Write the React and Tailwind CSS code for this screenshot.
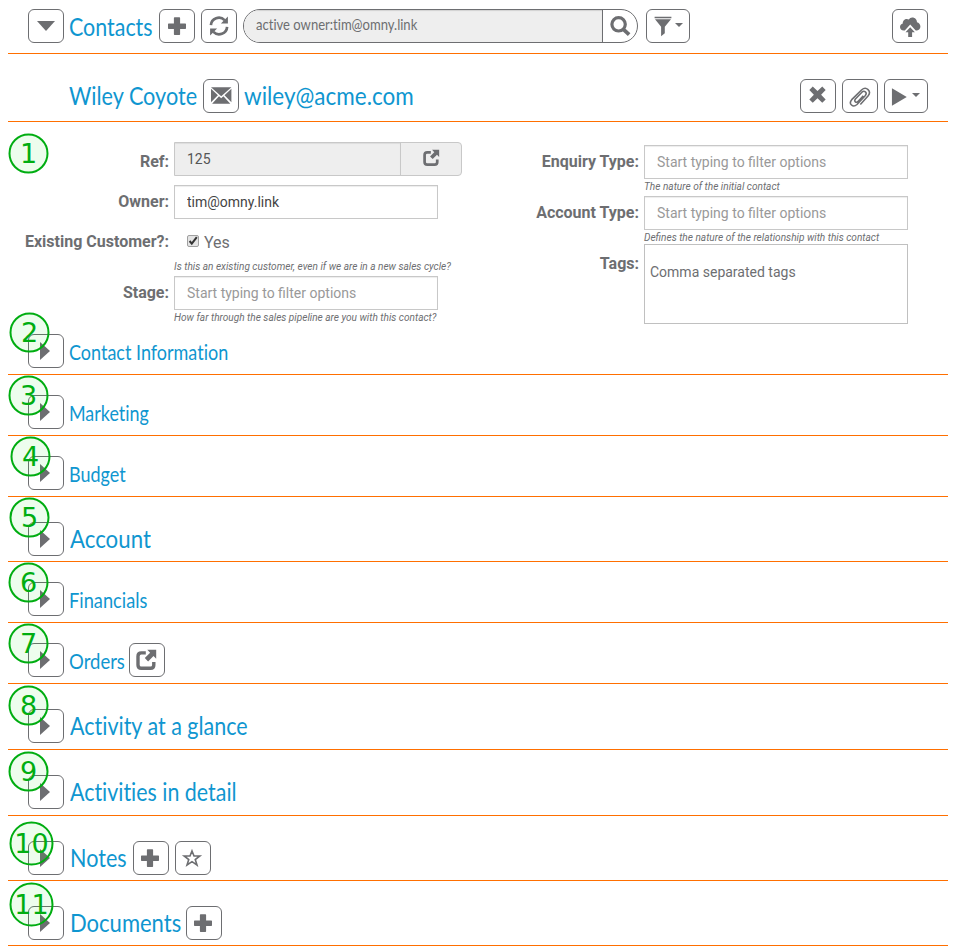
import { useLayoutEffect, useRef, useState } from "react";

/* Renders text condensed or expanded to the requested width. */
function FitText({ width, className = "", children }) {
  const ref = useRef(null);
  const [scale, setScale] = useState(1);
  useLayoutEffect(() => {
    setScale(width / ref.current.offsetWidth);
  }, [width]);
  return (
    <span className="block shrink-0 whitespace-nowrap" style={{ width }}>
      <span
        ref={ref}
        className={`inline-block origin-left [font-variant-ligatures:none] ${className}`}
        style={{ transform: `scaleX(${scale})` }}
      >
        {children}
      </span>
    </span>
  );
}

const iconShapes = {
  plus: <path d="M7.6 1.2h4.8q.7 0 .7.7v5.5h5.2q.7 0 .7.7v4.1q0 .7-.7.7h-5.2v5.4q0 .7-.7.7H7.6q-.7 0-.7-.7v-5.4H1.7q-.7 0-.7-.7V8.100q0-.7.7-.7h5.200V1.900q0-.7.7-.7z" />,
  refresh: (
    <>
      <path d="M1.900 9.200A8 8 0 0 1 15.600 4.100M18.100 10.800A8 8 0 0 1 4.400 15.900" fill="none" stroke="currentColor" strokeWidth="2.700" />
      <path d="M18.900.6v7h-7zM1.100 19.400v-7h7z" />
    </>
  ),
  search: (
    <>
      <circle cx="8.600" cy="8.300" r="6.700" fill="none" stroke="currentColor" strokeWidth="3.200" />
      <path d="M13.200 13.200l5.900 5.400" fill="none" stroke="currentColor" strokeWidth="3.800" />
    </>
  ),
  filter: <path d="M1.600.8h16.800v1.500H1.600zM2 3.300h16l-6.200 7.500v6.400l-3.700 3.100v-9.500z" />,
  cloud: (
    <>
      <path d="M3.900 13.400C1.300 13.400 0 11.900 0 10c0-1.900 1.200-3.100 2.800-3.500C2.600 3.800 4.600 2 6.800 2c.7 0 1.400.2 2 .5C9.700 1.100 10.700.4 12.200.4c3 0 4.800 2.300 4.800 4.900 1.800.4 3.400 2.100 3.400 4.200 0 2.200-1.500 3.900-3.400 3.900h-1.300L10.200 7.500 4.800 13.400z" />
      <path d="M10.200 10.300l4.700 4.900h-2.800V20H8.200v-4.800H5.500z" />
    </>
  ),
  remove: <path d="M5 1.600L10 6.400l5-4.800 3.600 3.600-4.800 5 4.800 5-3.600 3.600-5-4.800-5 4.800-3.600-3.600 4.800-5-4.800-5z" />,
  clip: (
    <path
      d="M10.800 17.600l7.300-8.100c3.800-4.600-1.600-9.800-6.200-5.700L2.600 13c-3.400 4.100 1.200 8 5 4.600l8-8.600c2.200-3-1.100-5.100-3.300-3.100l-6.200 6.500c-1.700 2.300.7 4 2.500 2.300l5-5.400"
      fill="none"
      stroke="currentColor"
      strokeWidth="1.500"
    />
  ),
  play: <path d="M1 .2l15.600 9.200L1 18.600z" />,
  envelope: <path d="M0 1.200h20.400l-10.200 9.100zM0 2.800l6.900 6.400L0 16.200zM20.400 2.800v13.400l-6.900-7zM8 10.200l2.200 2 2.200-2 6.900 7.600H1.100z" />,
  star: <path d="M10 3l2 5h5.800l-4.550 3.500 1.750 5.500L10 13.700l-5 3.300 1.750-5.500L2.200 8H8z" fill="none" stroke="currentColor" strokeWidth="1.600" />,
  external: (
    <>
      <path d="M9.800 2.900H5.300Q2 2.900 2 6.200v8.700q0 3.300 3.300 3.300h9.200q3.300 0 3.300-3.300V12" fill="none" stroke="currentColor" strokeWidth="3.400" />
      <path d="M11.300-.2h8.900v8.900l-2.700-2.700-5.400 5.400-3.300-3.300 5.300-5.400z" />
    </>
  ),
};

function Icon({ name, className = "size-5" }) {
  return (
    <svg viewBox="0 0 20 20" fill="currentColor" className={`block shrink-0 overflow-visible ${className}`}>
      {iconShapes[name]}
    </svg>
  );
}

function Button({ children, className = "w-9" }) {
  return (
    <button type="button" className={`flex h-[34px] shrink-0 items-center justify-center rounded-md border border-[#6d6e71] ${className}`}>
      {children}
    </button>
  );
}

const RightTriangle = () => (
  <svg viewBox="0 0 10 18" className="-ml-0.5 block h-[18px] w-2.5" fill="currentColor">
    <path d="M0 0l10 9-10 9z" />
  </svg>
);

const Caret = () => (
  <svg viewBox="0 0 8 4" className="mb-0.5 block h-1 w-2" fill="currentColor">
    <path d="M0 0h8L4 4z" />
  </svg>
);

function Badge({ n, className }) {
  return (
    <span
      className={`absolute z-10 flex translate-x-[0.5px] translate-y-[0.5px] items-center justify-center rounded-full border-2 border-[#00ad11] bg-[#00e000]/[0.07] pb-px font-['DejaVu_Sans',sans-serif] text-[27px] leading-none text-[#00ad11] ${n > 9 ? "size-11" : "size-10"} ${className}`}
    >
      {n}
    </span>
  );
}

const titleFont = "font-['Lato',sans-serif] text-[#0f96d0]";

const sections = [
  { n: 2, title: "Contact Information", width: 159, small: true, row: "h-[51px] pb-1.5", badge: "left-[1px] top-[-12px]" },
  { n: 3, title: "Marketing", width: 80, small: true, row: "h-[61px] pb-1.5", badge: "left-0 top-0" },
  { n: 4, title: "Budget", width: 57, small: true, row: "h-[61px] pb-1.5", badge: "left-[2px] top-0" },
  { n: 5, title: "Account", width: 81, row: "h-[65px] pb-[5px]", badge: "left-[1px] top-0" },
  { n: 6, title: "Financials", width: 78, small: true, row: "h-[61px] pb-1.5", badge: "left-0 top-0" },
  { n: 7, title: "Orders", width: 56, small: true, row: "h-[61px] pb-1.5", badge: "left-0 top-0", actions: ["external"] },
  { n: 8, title: "Activity at a glance", width: 178, row: "h-[66px] pb-1.5", badge: "left-0 top-[1px]" },
  { n: 9, title: "Activities in detail", width: 167, row: "h-[66px] pb-1.5", badge: "left-0 top-[1px]" },
  { n: 10, title: "Notes", width: 57, row: "h-[65px] pb-[5px]", badge: "left-[1px] top-[5px]", actions: ["plus", "star"] },
  { n: 11, title: "Documents", width: 111, row: "h-[65px] pb-[5px]", badge: "left-[1px] top-[1px]", actions: ["plus"] },
];

function Section({ n, title, width, small, row, badge, actions = [] }) {
  return (
    <section className={`relative flex items-end border-b border-[#ff6f00] pl-5 ${row}`}>
      <Badge n={n} className={badge} />
      <Button><RightTriangle /></Button>
      <h2 className={`flex h-[34px] items-center ${small ? "ml-[4.5px] pt-0.5" : "ml-[5.5px]"}`}>
        <FitText width={width} className={`${titleFont} ${small ? "text-[21.5px]" : "text-[25px]"} leading-[30px]`}>{title}</FitText>
      </h2>
      <div className={`flex gap-1.5 ${small ? "ml-[4.5px]" : n === 11 ? "ml-[5.5px]" : "ml-[6.5px]"}`}>
        {actions.map((name) => (
          <Button key={name}><Icon name={name} className="mr-0.5 size-5" /></Button>
        ))}
      </div>
    </section>
  );
}

function Label({ width, children }) {
  return (
    <label className="flex h-[34px] shrink-0 items-center justify-end pr-[5px] pt-1 text-[16px] font-bold text-[#6d6e71]" style={{ width }}>
      {children}
    </label>
  );
}

const field = "h-[34px] w-[264px] border border-[#c8c8c8] px-3 text-[14px] shadow-[inset_0_1px_1px_rgba(0,0,0,0.075)] outline-none placeholder:text-[#999]";
const help = "block whitespace-nowrap text-[10.1px] italic text-[#6d6e71]";

export default function App() {
  return (
    <main className="h-[951px] w-[961px] overflow-hidden bg-white pl-2 pr-[13px] font-['Roboto',sans-serif] text-[#6d6e71]">
      <header className="flex h-[54px] items-center border-b border-[#ff6f00] pl-5 pr-5">
        <div className="flex w-full items-center pb-px">
          <Button>
            <svg viewBox="0 0 18 10" className="block h-2.5 w-[18px]" fill="currentColor"><path d="M0 0h18l-9 10z" /></svg>
          </Button>
          <h1 className="ml-[5px] pt-px"><FitText width={84} className={`${titleFont} text-[25px] leading-[30px]`}>Contacts</FitText></h1>
          <div className="ml-1.5 flex gap-1.5">
            <Button><Icon name="plus" className="mr-px size-5" /></Button>
            <Button><Icon name="refresh" /></Button>
          </div>
          <div className="ml-1.5 flex h-[34px] w-[395px] overflow-hidden rounded-full border border-[#6d6e71]">
            <div className="flex w-[359px] items-center border-r border-[#6d6e71] bg-[#eee] pb-[3px] pl-3 shadow-[inset_0_1px_1px_rgba(0,0,0,0.12)]">
              <FitText width={161} className="font-['Lato',sans-serif] text-[15px] leading-5">active owner:tim@omny.link</FitText>
            </div>
            <button type="button" className="flex grow items-center justify-center"><Icon name="search" /></button>
          </div>
          <Button className="ml-2 w-11 gap-0.5"><Icon name="filter" className="size-5" /><Caret /></Button>
          <div className="ml-auto"><Button><Icon name="cloud" className="mr-px mt-0.5 size-5" /></Button></div>
        </div>
      </header>

      <div className="flex h-[68px] items-end border-b border-[#ff6f00] pb-2 pl-[61px] pr-5">
        <div className="pb-px"><FitText width={128} className={`${titleFont} text-[25px] leading-[32px]`}>Wiley Coyote</FitText></div>
        <Button className="ml-1.5 w-9"><Icon name="envelope" className="mr-px size-5" /></Button>
        <div className="ml-[5px] pb-px"><FitText width={170} className={`${titleFont} text-[25px] leading-[32px]`}>wiley@acme.com</FitText></div>
        <div className="ml-auto flex gap-1.5">
          <Button><Icon name="remove" className="mb-1 mr-0.5 size-[19px]" /></Button>
          <Button><Icon name="clip" className="mr-px size-[21px]" /></Button>
          <Button className="w-11 gap-0.5"><Icon name="play" className="-ml-px mt-0.5 size-[19px]" /><Caret /></Button>
        </div>
      </div>

      <div className="relative flex h-[202px]">
        <Badge n={1} className="left-0 top-[11px]" />
        <div className="w-[470px] pt-5">
          <div className="flex">
            <div className="pt-px"><Label width={166}>Ref:</Label></div>
            <div className="flex h-[34px] w-[288px] overflow-hidden rounded-r border border-[#c8c8c8] bg-[#eee]">
              <input readOnly value="125" className="w-[226px] border-r border-[#c8c8c8] px-3 text-[14px] text-[#555] shadow-[inset_0_1px_1px_rgba(0,0,0,0.075)] outline-none" />
              <button type="button" className="flex grow items-center justify-center pb-0.5"><Icon name="external" className="size-4" /></button>
            </div>
          </div>
          <div className="mt-2 flex items-start">
            <div className="-mt-0.5"><Label width={166}>Owner:</Label></div>
            <input readOnly value="tim@omny.link" className={`${field} text-[#444]`} />
          </div>
          <div className="mt-1 flex h-[53px]">
            <Label width={166}>Existing Customer?:</Label>
            <div>
              <div className="flex h-[38px] items-center pl-[13px]">
                <span className="mb-0.5 flex size-3 items-center justify-center rounded-[2px] border border-[#a0a0a0] bg-[#e4e4e4]">
                  <svg viewBox="0 0 10 10" className="block size-2.5 shrink-0 overflow-visible"><path d="M1.600 5l2.200 2.700L8.800 1.200" fill="none" stroke="#333" strokeWidth="2" /></svg>
                </span>
                <span className="ml-[5px] pt-0.5 text-[16px]">Yes</span>
              </div>
              <span className={`${help} leading-3`}>Is this an existing customer, even if we are in a new sales cycle?</span>
            </div>
          </div>
          <div className="flex items-start">
            <div className="-mt-0.5"><Label width={166}>Stage:</Label></div>
            <div>
              <input placeholder="Start typing to filter options" className={`block ${field}`} />
              <span className={`${help} leading-4`}>How far through the sales pipeline are you with this contact?</span>
            </div>
          </div>
        </div>
        <div className="pt-[23px]">
          <div className="flex h-[51px] items-start">
            <div className="-mt-0.5"><Label width={166}>Enquiry Type:</Label></div>
            <div>
              <input placeholder="Start typing to filter options" className={`block ${field}`} />
              <span className={`${help} leading-4`}>The nature of the initial contact</span>
            </div>
          </div>
          <div className="flex h-12 items-start">
            <div className="-mt-0.5"><Label width={166}>Account Type:</Label></div>
            <div>
              <input placeholder="Start typing to filter options" className={`block ${field}`} />
              <span className={`${help} leading-4`}>Defines the nature of the relationship with this contact</span>
            </div>
          </div>
          <div className="flex items-start">
            <div className="pt-px"><Label width={166}>Tags:</Label></div>
            <div className="h-20 w-[264px] border border-[#c0c0c0] px-[5px] pt-[17px] text-[14px] leading-5">Comma separated tags</div>
          </div>
        </div>
      </div>

      {sections.map((s) => <Section key={s.n} {...s} />)}
    </main>
  );
}
